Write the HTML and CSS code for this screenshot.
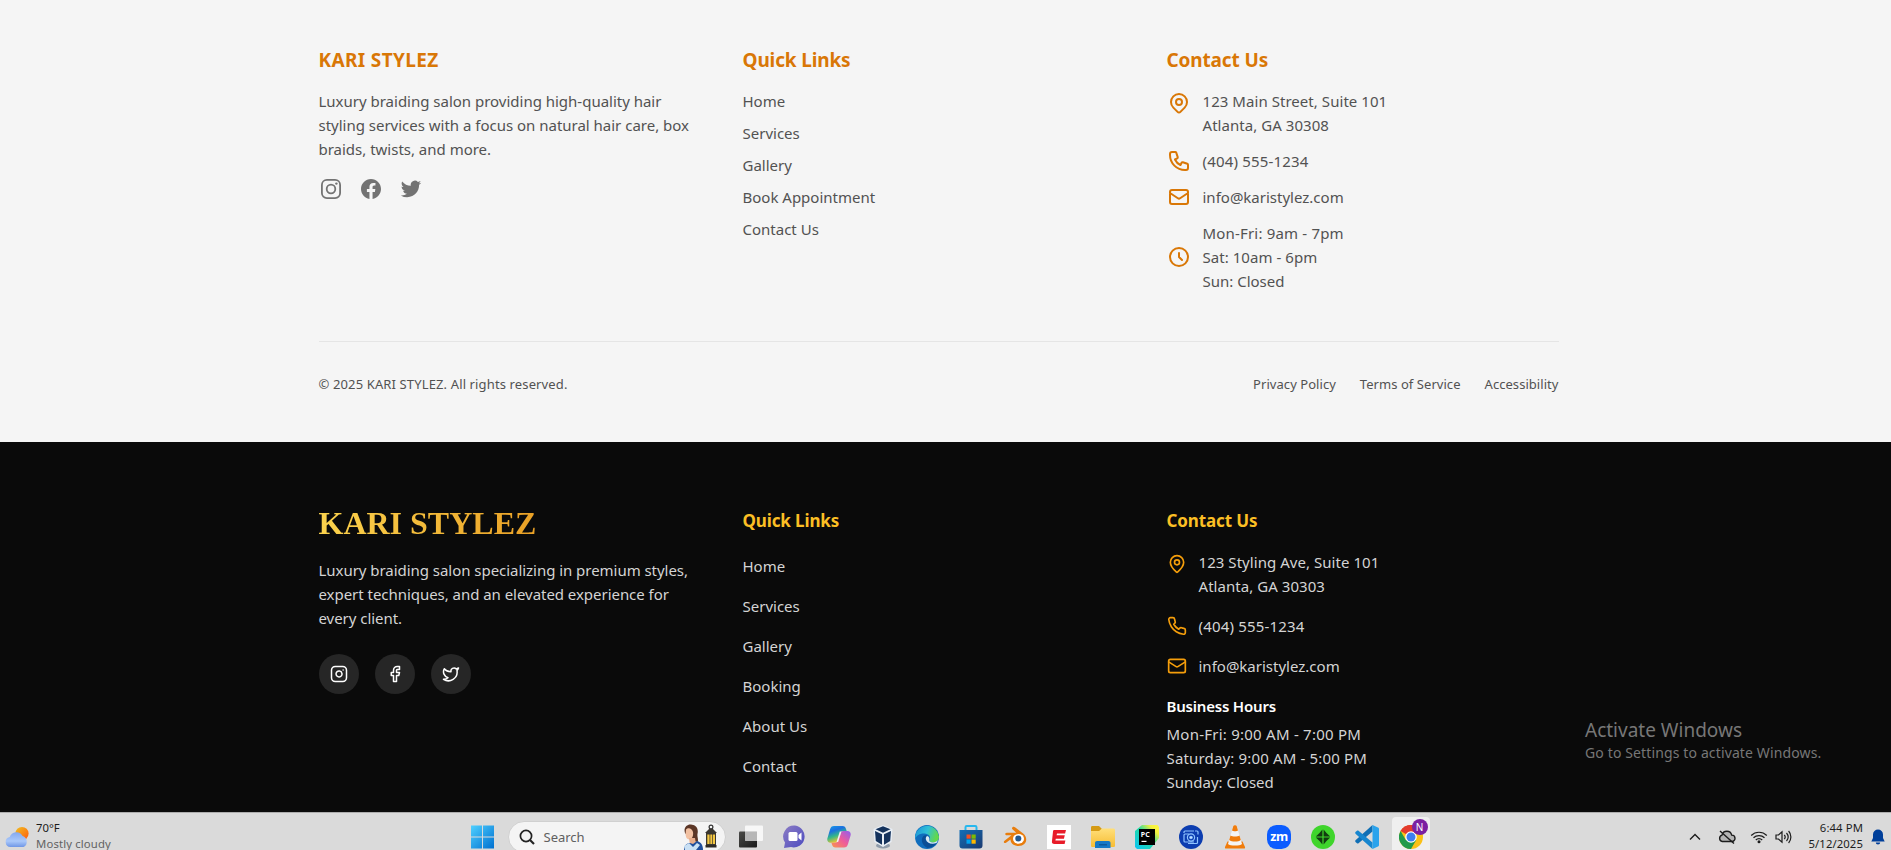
FILE: index.html
```html
<!DOCTYPE html>
<html lang="en">
<head>
<meta charset="utf-8">
<title>KARI STYLEZ</title>
<link rel="stylesheet" href="styles.css">
</head>
<body>
<div class="screen">
  <footer class="footer-light">
    <div class="container">
      <div class="columns">
        <section>
          <h3 class="title brand">KARI STYLEZ</h3>
          <p class="about">Luxury braiding salon providing high-quality hair<br>styling services with a focus on natural hair care, box<br>braids, twists, and more.</p>
          <div class="social-plain">
            <svg viewBox="0 0 24 24" fill="none" stroke="currentColor" stroke-width="1.8"><rect x="2.9" y="2.9" width="18.2" height="18.2" rx="5"/><circle cx="12" cy="12" r="4.3"/><circle cx="17.4" cy="6.6" r="1.2" fill="currentColor" stroke="none"/></svg>
            <svg viewBox="0 0 24 24" fill="currentColor"><path d="M12 2C6.477 2 2 6.477 2 12c0 4.991 3.657 9.128 8.438 9.879V14.89h-2.54V12h2.54V9.797c0-2.506 1.492-3.89 3.777-3.89 1.094 0 2.238.195 2.238.195v2.46h-1.26c-1.243 0-1.63.771-1.63 1.562V12h2.773l-.443 2.89h-2.33v6.989C18.343 21.129 22 16.99 22 12c0-5.523-4.477-10-10-10z"/></svg>
            <svg viewBox="0 0 24 24" fill="currentColor"><path d="M22.162 5.656a8.384 8.384 0 0 1-2.402.658A4.196 4.196 0 0 0 21.6 4c-.82.488-1.719.83-2.656 1.015a4.182 4.182 0 0 0-7.126 3.814 11.874 11.874 0 0 1-8.62-4.37 4.168 4.168 0 0 0-.566 2.103c0 1.45.738 2.731 1.86 3.481a4.168 4.168 0 0 1-1.894-.523v.052a4.185 4.185 0 0 0 3.355 4.101 4.21 4.21 0 0 1-1.89.072A4.185 4.185 0 0 0 7.97 16.65a8.394 8.394 0 0 1-6.191 1.732 11.83 11.83 0 0 0 6.41 1.88c7.693 0 11.9-6.373 11.9-11.9 0-.18-.005-.362-.013-.54a8.496 8.496 0 0 0 2.087-2.165z"/></svg>
          </div>
        </section>
        <section>
          <h3 class="title">Quick Links</h3>
          <ul class="links">
            <li>Home</li><li>Services</li><li>Gallery</li><li>Book Appointment</li><li>Contact Us</li>
          </ul>
        </section>
        <section>
          <h3 class="title">Contact Us</h3>
          <ul class="contact">
            <li class="top"><svg viewBox="0 0 24 24"><path d="M17.657 16.657L13.414 20.9a1.998 1.998 0 01-2.827 0l-4.244-4.243a8 8 0 1111.314 0z"/><path d="M15 11a3 3 0 11-6 0 3 3 0 016 0z"/></svg><span class="address">123 Main Street, Suite 101<br>Atlanta, GA 30308</span></li>
            <li><svg viewBox="0 0 24 24"><path d="M3 5a2 2 0 012-2h3.28a1 1 0 01.948.684l1.498 4.493a1 1 0 01-.502 1.21l-2.257 1.13a11.042 11.042 0 005.516 5.516l1.13-2.257a1 1 0 011.21-.502l4.493 1.498a1 1 0 01.684.949V19a2 2 0 01-2 2h-1C9.716 21 3 14.284 3 6V5z"/></svg><span class="digits">(404) 555-1234</span></li>
            <li><svg viewBox="0 0 24 24"><path d="M3 8l7.89 5.26a2 2 0 002.22 0L21 8M5 19h14a2 2 0 002-2V7a2 2 0 00-2-2H5a2 2 0 00-2 2v10a2 2 0 002 2z"/></svg><span>info@karistylez.com</span></li>
            <li><svg viewBox="0 0 24 24"><path d="M12 8v4l3 3m6-3a9 9 0 11-18 0 9 9 0 0118 0z"/></svg><span><span class="digits">Mon-Fri: 9am - 7pm</span><br><span class="address">Sat: 10am - 6pm</span><br>Sun: Closed</span></li>
          </ul>
        </section>
      </div>
      <div class="legal">
        <span class="copyright">© 2025 KARI STYLEZ. All rights reserved.</span>
        <nav><span>Privacy Policy</span><span>Terms of Service</span><span>Accessibility</span></nav>
      </div>
    </div>
  </footer>

  <footer class="footer-dark">
    <div class="container columns">
      <section>
        <h2 class="logo"><span>KARI STYLEZ</span></h2>
        <p class="about">Luxury braiding salon specializing in premium styles,<br>expert techniques, and an elevated experience for<br>every client.</p>
        <div class="social-round">
          <span><svg viewBox="0 0 24 24"><rect x="2" y="2" width="20" height="20" rx="5"/><path d="M16 11.37A4 4 0 1 1 12.63 8 4 4 0 0 1 16 11.37z"/><path d="M17.5 6.5h.01"/></svg></span>
          <span><svg viewBox="0 0 24 24"><path d="M18 2h-3a5 5 0 0 0-5 5v3H7v4h3v8h4v-8h3l1-4h-4V7a1 1 0 0 1 1-1h3z"/></svg></span>
          <span><svg viewBox="0 0 24 24"><path d="M22 4s-.7 2.1-2 3.4c1.6 10-9.4 17.3-18 11.6 2.2.1 4.4-.6 6-2C3 15.5.5 9.6 3 5c2.2 2.6 5.6 4.1 9 4-.9-4.2 4-6.6 7-3.8 1.1 0 3-1.2 3-1.2z"/></svg></span>
        </div>
      </section>
      <section>
        <h3 class="title">Quick Links</h3>
        <ul class="links">
          <li>Home</li><li>Services</li><li>Gallery</li><li>Booking</li><li>About Us</li><li>Contact</li>
        </ul>
      </section>
      <section>
        <h3 class="title">Contact Us</h3>
        <ul class="contact">
          <li class="top"><svg viewBox="0 0 24 24"><path d="M20 10c0 4.993-5.539 10.193-7.399 11.799a1 1 0 0 1-1.202 0C9.539 20.193 4 14.993 4 10a8 8 0 0 1 16 0"/><circle cx="12" cy="10" r="3"/></svg><span class="address">123 Styling Ave, Suite 101<br>Atlanta, GA 30303</span></li>
          <li><svg viewBox="0 0 24 24"><path d="M22 16.92v3a2 2 0 0 1-2.18 2 19.79 19.79 0 0 1-8.63-3.07 19.5 19.5 0 0 1-6-6 19.79 19.79 0 0 1-3.07-8.67A2 2 0 0 1 4.11 2h3a2 2 0 0 1 2 1.72 12.84 12.84 0 0 0 .7 2.81 2 2 0 0 1-.45 2.11L8.09 9.91a16 16 0 0 0 6 6l1.27-1.27a2 2 0 0 1 2.11-.45 12.84 12.84 0 0 0 2.81.7A2 2 0 0 1 22 16.92z"/></svg><span class="digits">(404) 555-1234</span></li>
          <li><svg viewBox="0 0 24 24"><rect x="2" y="4" width="20" height="16" rx="2"/><path d="m22 7-8.97 5.7a1.94 1.94 0 0 1-2.06 0L2 7"/></svg><span>info@karistylez.com</span></li>
        </ul>
        <h4 class="hours-title">Business Hours</h4>
        <p class="hours"><span class="mon-fri">Mon-Fri: 9:00 AM - 7:00 PM</span><br><span class="sat">Saturday: 9:00 AM - 5:00 PM</span><br>Sunday: Closed</p>
      </section>
    </div>
  </footer>

  <div class="watermark">
    <p class="wm-title">Activate Windows</p>
    <p class="wm-text">Go to Settings to activate Windows.</p>
  </div>

  <div class="taskbar">
    <div class="weather">
      <svg width="24" height="22" viewBox="0 0 24 22">
        <defs>
          <linearGradient id="sun" x1="0" y1="0" x2="1" y2="1"><stop offset="0" stop-color="#f0c020"/><stop offset="1" stop-color="#ff5a10"/></linearGradient>
          <linearGradient id="cloud" x1="0" y1="0" x2="0" y2="1"><stop offset="0" stop-color="#84a8ee"/><stop offset=".6" stop-color="#a9c8fa"/><stop offset="1" stop-color="#6f96e6"/></linearGradient>
        </defs>
        <circle cx="17" cy="7.5" r="6.6" fill="url(#sun)"/>
        <path d="M5.5 21a5 5 0 0 1-.8-9.9A7 7 0 0 1 17.6 10a6 6 0 0 1 1 11z" fill="url(#cloud)"/>
      </svg>
      <div class="weather-text"><span class="temp">70°F</span><span class="sky">Mostly cloudy</span></div>
    </div>

    <div class="apps">
      <svg class="start" width="24" height="24" viewBox="0 0 24 24">
        <defs><linearGradient id="win" x1="0" y1="0" x2="1" y2="1"><stop offset="0" stop-color="#4fd0ff"/><stop offset="1" stop-color="#0070d0"/></linearGradient></defs>
        <path fill="url(#win)" d="M1 .5h11v11H1zM13 .5h11v11H13zM1 12.5h11v11H1zM13 12.5h11v11H13z"/>
      </svg>
      <div class="search">
        <svg width="16" height="16" viewBox="0 0 16 16" fill="none" stroke="#222" stroke-width="1.7"><circle cx="7" cy="7" r="5.6"/><path d="M11 11l4 4" stroke-width="2.2"/></svg>
        <span>Search</span>
        <svg class="art" width="34" height="26" viewBox="0 0 34 26">
          <path d="M2 9C0 3 5-.5 9 .8c5 .4 6.500 5 5.500 9-.5 3 1 5 .3 8H9z" fill="#5b3626"/>
          <path d="M3 5.500c2-2.500 6-1.500 7 2.500.6 4-1 7-3.500 7.500C3 15.500 2 12 3 5.500z" fill="#f2c1a2"/>
          <path d="M6 14h6l1 6-6 1z" fill="#e8ae8d"/>
          <path d="M1 26c0-5 3-7 6-7l3 1 4-3c4 1 6 4 6 9z" fill="#1f4e9c"/>
          <path d="M1 22l5-3 4 4 4-4 3 2-4 5H2z" fill="#c9e0f4"/>
          <circle cx="28" cy="3" r="1.900" fill="none" stroke="#333" stroke-width="1.200"/>
          <path d="M22 9l4-4h4l4 4z" fill="#3a3630"/>
          <path d="M23 9h10v12H23z" fill="#3a3630"/>
          <path d="M24.300 10.500h2.300V20h-2.300zM27.300 10.500h2V20h-2zM30 10.500h2V20h-2z" fill="#f5c842"/>
          <path d="M22.500 21h11v2.500h-11z" fill="#2c2925"/>
        </svg>
      </div>

      <svg class="app" viewBox="0 0 24 24">
        <defs><linearGradient id="tvd" x1="0" y1="0" x2="1" y2="1"><stop offset="0" stop-color="#4b4b48"/><stop offset="1" stop-color="#1a1a1a"/></linearGradient></defs>
        <rect y="6.500" width="18" height="16" rx="1" fill="url(#tvd)"/><rect x="6" y=".5" width="18" height="15.500" rx="1" fill="#fafafa" fill-opacity=".88"/><rect x="6" y="6.500" width="12" height="9.500" fill="#a8a8a8" fill-opacity=".75"/>
      </svg>
      <svg class="app" viewBox="0 0 24 24">
        <defs><linearGradient id="chat" x1="0" y1="0" x2="1" y2="1"><stop offset="0" stop-color="#8c7cc4"/><stop offset="1" stop-color="#4c4cc0"/></linearGradient></defs>
        <path d="M12 .5a11 11 0 1 1-4 21.600L1 23l1-5.500A11 11 0 0 1 12 .5z" fill="url(#chat)"/><rect x="5.500" y="7" width="9" height="9" rx="1.500" fill="#fff"/><path d="M15.500 10l3-2.500v8l-3-2.500z" fill="#fff"/>
      </svg>
      <svg class="app" viewBox="0 0 24 24">
        <defs>
          <linearGradient id="cpa" x1="0" y1="0" x2=".4" y2="1"><stop offset="0" stop-color="#18a0e8"/><stop offset=".35" stop-color="#1b6fe0"/><stop offset=".65" stop-color="#35b889"/><stop offset="1" stop-color="#f4c52c"/></linearGradient>
          <linearGradient id="cpb" x1="1" y1="0" x2="0" y2="1"><stop offset="0" stop-color="#8f5ff0"/><stop offset=".5" stop-color="#ef5b9a"/><stop offset="1" stop-color="#f9964a"/></linearGradient>
        </defs>
        <path d="M7 1h8.500c2 0 3 1 3.500 3l.7 2h-3.200c-1.800 0-2.500.8-3 2.500L11.500 15c-.6 2-1.500 2.700-3.500 2.700H3.500C.7 17.700-.2 15.500.5 13L3 4.500C3.700 2 4.800 1 7 1z" fill="url(#cpa)"/>
        <path d="M17 22.500H8.500c-2 0-3-1-3.500-3l-.6-1.800H8c2 0 3-.7 3.500-2.700L13.500 8.500C14 6.800 14.700 6 16.500 6h4c2.800 0 3.700 2.200 3 4.700L21 19c-.7 2.500-1.800 3.500-4 3.500z" fill="url(#cpb)"/>
        <path d="M14.500 6.500l-3.400 10.500H9.500l3.300-10.500z" fill="#f5ecf4"/>
      </svg>
      <svg class="app" viewBox="0 0 24 24">
        <ellipse cx="12" cy="20.500" rx="7" ry="3" fill="#8f9cab"/><path d="M12 0l9.500 4-1 13L12 22l-8.500-5-1-13z" fill="#e8eef5"/><path d="M12 1.300l7.500 3L12 7.800l-7.500-3.500zM4 6l7 3.300v10.500L4.800 16zM20 6l-7 3.300v10.500l6.200-3.800z" fill="#14325c"/>
      </svg>
      <svg class="app" viewBox="0 0 24 24">
        <defs><linearGradient id="eda" x1="0" y1="0" x2="1" y2=".3"><stop offset="0" stop-color="#1b8fd6"/><stop offset=".55" stop-color="#2fc0d8"/><stop offset="1" stop-color="#62d84c"/></linearGradient></defs>
        <circle cx="12" cy="12" r="12" fill="#0f6dbd"/>
        <path d="M.2 11A12 12 0 0 1 24 11.500c0 4-2.800 6-6.200 6-2.800 0-3.800-1-3.300-2 1.400-2.300.4-6-3.500-6.700C6 7.800 1.500 10 .2 14z" fill="url(#eda)"/>
        <path d="M8.500 11c-3 3-2 9 4 12 4-.3 7.500-2 9.500-5.500-5 2.200-10 .5-11-3-.4-1.500.2-3 1.200-3.800-1.200-.8-2.700-.6-3.700.3z" fill="#0b4f96"/>
        <path d="M12 11c2 .2 2.800 2.200 2.300 4-.3 1.300.8 2.500 3.600 2.500 2 0 4-1 4.800-2.200-.3 1.500-.7 2.200-1.200 2.800-5 1.800-9.800 0-10.600-3.500-.3-1.500.1-2.700 1.100-3.600z" fill="#dceaf2"/>
      </svg>
      <svg class="app" viewBox="0 0 24 24">
        <defs><linearGradient id="st" x1="0" y1="0" x2="1" y2="1"><stop offset="0" stop-color="#126fb8"/><stop offset="1" stop-color="#1b3a70"/></linearGradient></defs>
        <path d="M6.500 6V2.300c0-.8.500-1.300 1.300-1.300h8.400c.8 0 1.300.5 1.300 1.300V6" fill="none" stroke="#27b8ee" stroke-width="2"/><path d="M.5 5h23v15.500a3 3 0 0 1-3 3h-17a3 3 0 0 1-3-3z" fill="url(#st)"/>
        <path d="M7.500 9.500h4.200v4.200H7.500z" fill="#f25022"/><path d="M12.500 9.500h4.200v4.200h-4.200z" fill="#7fba00"/><path d="M7.500 14.500h4.200v4.200H7.500z" fill="#00a4ef"/><path d="M12.500 14.500h4.200v4.200h-4.200z" fill="#ffb900"/>
      </svg>
      <svg class="app" viewBox="0 0 24 24">
        <path d="M9.500 2.200c.8-.6 1.700-.5 2.500.1l8.500 6.500c5 4.500 3 12-5 12.200-5 0-8-3-8-6.500L3 17.700c-1.600 1-3-.7-1.500-2l7-5.400H3.700c-2-.1-2-2.500 0-2.600h9.500L9.700 4.600c-.9-.7-.9-1.700-.2-2.400z" fill="#e87d0d"/><ellipse cx="15.500" cy="13.800" rx="5.500" ry="4.900" fill="#fff"/><circle cx="15.300" cy="13.600" r="3" fill="#23588f"/>
      </svg>
      <svg class="app" viewBox="0 0 24 24">
        <path d="M0 0h24v24H0z" fill="#fff"/><path d="M7 5h12l-.9 3.500H10l-.4 1.800h8.200l-.9 3.400H8.800l-.4 1.800h10l-.8 3.500H7.500c-2 0-3-1-2.500-3.300L6 6.500C6.200 5.500 6.500 5 7 5z" fill="#e81c2a"/>
      </svg>
      <svg class="app" viewBox="0 0 24 24">
        <defs><linearGradient id="fo" x1="0" y1="0" x2="0" y2="1"><stop offset="0" stop-color="#ffdf7a"/><stop offset="1" stop-color="#f7bd34"/></linearGradient></defs>
        <path d="M0 2.500C0 1.700.5 1 1.300 1H8l3 3v5H0z" fill="#d59a14"/><path d="M0 6l8 0 3-2.500h11.500c.9 0 1.500.6 1.500 1.500v15.500c0 1-.6 1.500-1.500 1.500h-21C.6 22 0 21.500 0 20.500z" fill="url(#fo)"/><path d="M4 23v-5c0-1.200.8-2 2-2h11.500c1.200 0 2 .8 2 2v5z" fill="#1579c6"/><path d="M8 19h8v1.500H8z" fill="#0d5a9c"/>
      </svg>
      <svg class="app" viewBox="0 0 24 24">
        <defs><linearGradient id="py" x1="0" y1="1" x2="1" y2="0"><stop offset="0" stop-color="#0ac4f5"/><stop offset=".5" stop-color="#20d8a8"/><stop offset=".8" stop-color="#f5f03c"/><stop offset="1" stop-color="#fcf84a"/></linearGradient></defs>
        <path d="M7 0h15.500L24 2v11l-9 11H2L0 22V6z" fill="url(#py)"/><path d="M4 4h16v16H4z" fill="#000"/><text class="pc" x="5.800" y="12.400">PC</text><path d="M6.500 15.800h5v1.200h-5z" fill="#fff"/>
      </svg>
      <svg class="app" viewBox="0 0 24 24" fill="none" stroke="#8fc4ff" stroke-width="1.200">
        <circle cx="12" cy="12" r="12" fill="#0c3db0" stroke="none"/><path d="M5 8V7a1 1 0 0 1 1-1h9M5 16V10a1 1 0 0 1 1-1h4M9 18.500h8.500a1 1 0 0 0 1-1V12M16 6h2a1 1 0 0 1 1 1v2.500M5 16a1 1 0 0 0 1 1h9"/><circle cx="12" cy="12.500" r="3.600"/><circle cx="12" cy="12.500" r="1.200" fill="#fff"/>
      </svg>
      <svg class="app" viewBox="0 0 24 24">
        <path d="M4.500 16.500h15L22 22c.3 1-.2 1.500-1 1.500H3c-.8 0-1.300-.5-1-1.500z" fill="#f07c0c"/><path d="M10.300 1c.3-.9 3.100-.9 3.400 0l5.300 18c-2 2-12 2-14 0z" fill="#f4f4f4"/><path d="M10.300 1c.3-.9 3.100-.9 3.400 0L15 5.500c-1 .9-5 .9-6 0zM7.500 10.500c2 1.400 7 1.400 9 0l1.300 4.500c-2.500 2-9 2-11.600 0z" fill="#f07c0c"/>
      </svg>
      <svg class="app" viewBox="0 0 24 24"><rect width="24" height="24" rx="9.500" fill="#0b5cff"/><text class="zm" x="12" y="16" text-anchor="middle">zm</text></svg>
      <svg class="app" viewBox="0 0 24 24"><circle cx="12" cy="12" r="12" fill="#3fd52c"/><path d="M11.400 4.500v6.900H4.800L8.500 8zM12.600 4.500v6.900h6.600L15.500 8zM11.400 19.500v-6.900H4.800L8.500 16zM12.600 19.500v-6.900h6.600L15.500 16z" fill="#123c10"/></svg>
      <svg class="app" viewBox="0 0 24 24">
        <path d="M17.500 0v6.500L3.500 18.300c-.5.400-1 .4-1.500 0l-1.500-1.400c-.5-.5-.5-1.100 0-1.600z" fill="#0f6fb5"/><path d="M17.500 24v-6.500L3.500 5.700c-.5-.4-1-.4-1.500 0L.5 7.100c-.5.500-.5 1.100 0 1.600z" fill="#1686cf"/><path d="M17.500 0L23 2.500c.7.300 1 .8 1 1.500v16c0 .7-.3 1.200-1 1.500L17.500 24z" fill="#2aa3ec"/>
      </svg>
      <div class="active">
        <svg class="app" viewBox="0 0 24 24">
          <circle cx="12" cy="12" r="12" fill="#fbc116"/><path d="M12 12L1.600 6A12 12 0 0 1 22.400 6z" fill="#e33b2e"/><path d="M1.600 6A12 12 0 0 0 12 24l5.200-9H6.800z" fill="#229a4b"/><path d="M1.600 6A12 12 0 0 1 12 0v6.500z" fill="#e33b2e"/><circle cx="12" cy="12" r="5.800" fill="#fff"/><circle cx="12" cy="12" r="4.500" fill="#3d7ff0"/>
        </svg>
        <span class="badge">N</span>
      </div>
    </div>

    <div class="tray">
      <svg width="12" height="8" viewBox="0 0 12 8" fill="none" stroke="#1c1c1c" stroke-width="1.400"><path d="M1 6.500l5-5 5 5"/></svg>
      <svg class="cloud" width="18" height="14" viewBox="0 0 18 14" fill="none" stroke="#1c1c1c" stroke-width="1.400"><path d="M4.300 11.500a3.300 3.300 0 0 1-.3-6.400 5 5 0 0 1 9.700 0 3.200 3.200 0 0 1 .2 6.400z" fill="#b4b4b4"/><path d="M2 1l14 12.500"/></svg>
      <svg class="wifi" width="18" height="14" viewBox="0 0 18 14" fill="none" stroke="#1c1c1c" stroke-width="1.200"><path d="M1.200 5.500a11 11 0 0 1 15.600 0M3.500 7.800a7.800 7.800 0 0 1 11 0M5.800 10a4.500 4.500 0 0 1 6.400 0"/><circle cx="9" cy="11.800" r="1.500" fill="#1c1c1c" stroke="none"/></svg>
      <svg class="vol" width="17" height="14" viewBox="0 0 17 14" fill="none" stroke="#1c1c1c" stroke-width="1.200"><path d="M1 5h2.500L7 1.800v10.400L3.500 9H1zM9.300 4.800a3.500 3.500 0 0 1 0 4.400M11.500 3a6.200 6.200 0 0 1 0 8M13.600 1a9 9 0 0 1 0 12"/></svg>
      <div class="clock"><span>6:44 PM</span><span>5/12/2025</span></div>
      <svg width="14" height="16" viewBox="0 0 14 16" fill="#003f9a"><path d="M7 .5a5 5 0 0 1 5 5V9l1.700 3.500H.3L2 9V5.500a5 5 0 0 1 5-5zM4.800 13.500h4.400a2.200 2 0 0 1-4.400 0z"/></svg>
    </div>
  </div>
</div>
</body>
</html>
```

FILE: styles.css
```css
* { box-sizing: border-box; margin: 0; padding: 0; }

body {
  background: #0a0a0a;
  font-family: "Noto Sans", "Open Sans", sans-serif;
  font-size: 15px;
  line-height: 24px;
  overflow: hidden;
  white-space: nowrap;
}

ul { list-style: none; }
svg { display: block; flex: none; }

.screen {
  position: relative;
  display: flex;
  flex-direction: column;
  height: 850px;
  overflow: hidden;
}

.container { width: 1240px; margin-left: 318.500px; }
.columns { display: grid; grid-template-columns: repeat(3, 392px); column-gap: 32px; }

.address { letter-spacing: .05px; }
.digits { letter-spacing: .18px; }
.mon-fri { letter-spacing: .24px; }
.sat { letter-spacing: .16px; }

/* Light footer */
.footer-light {
  flex: none;
  height: 442px;
  padding-top: 46px;
  background: #f5f5f5;
  color: #525252;
}
.footer-light .title {
  margin-bottom: 15px;
  color: #d97706;
  font-size: 19px;
  font-weight: 700;
  line-height: 28px;
  letter-spacing: -.14px;
}
.footer-light .brand { letter-spacing: .35px; }
.footer-light .about { letter-spacing: -.01px; }
.footer-light .links { display: flex; flex-direction: column; gap: 8px; }
.footer-light .contact { display: flex; flex-direction: column; gap: 12px; }
.contact li { display: flex; align-items: center; gap: 12px; }
.contact .top { align-items: flex-start; }
.contact svg { fill: none; stroke: currentColor; stroke-width: 2; stroke-linecap: round; stroke-linejoin: round; }
.footer-light .contact svg { width: 24px; height: 24px; color: #d97706; }
.footer-light .top svg { margin-top: 2px; }

.social-plain { display: flex; gap: 16px; margin-top: 16px; color: #737373; }
.social-plain svg { width: 24px; height: 24px; }

.legal {
  display: flex;
  justify-content: space-between;
  margin-top: 48px;
  padding-top: 32px;
  border-top: 1px solid #e5e5e5;
  font-size: 13px;
  line-height: 20px;
}
.legal nav { display: flex; gap: 24px; letter-spacing: .05px; }
.copyright { letter-spacing: .13px; }

/* Dark footer */
.footer-dark {
  flex: none;
  height: 370px;
  padding-top: 64px;
  background: #0a0a0a;
  color: #d4d4d4;
}
.footer-dark .title {
  margin-bottom: 15px;
  padding-top: 1px;
  color: #fbbf24;
  font-size: 17px;
  font-weight: 700;
  line-height: 28px;
  letter-spacing: -.12px;
}
.footer-dark .about { letter-spacing: -.04px; }
.logo {
  margin: -1px 0 17px;
  font: 700 32px/36px "Liberation Serif", serif;
  color: transparent;
  background: linear-gradient(90deg, #fcd34d, #d97706);
  -webkit-background-clip: text;
  background-clip: text;
}
.social-round { display: flex; gap: 16px; margin-top: 24px; }
.social-round span {
  display: flex;
  align-items: center;
  justify-content: center;
  width: 40px;
  height: 40px;
  border-radius: 50%;
  background: #262626;
  color: #fff;
}
.social-round svg {
  width: 18px;
  height: 18px;
  fill: none;
  stroke: currentColor;
  stroke-width: 2;
  stroke-linecap: round;
  stroke-linejoin: round;
}
.footer-dark .links { display: flex; flex-direction: column; gap: 16px; padding-top: 4px; }
.footer-dark .contact { display: flex; flex-direction: column; gap: 16px; }
.footer-dark .contact svg { width: 20px; height: 20px; color: #f59e0b; }
.footer-dark .top svg { margin-top: 4px; }
.hours-title { margin: 16px 0 4px; color: #fff; font-size: 15px; font-weight: 600; letter-spacing: -.2px; }

/* Desktop watermark */
.watermark { position: absolute; left: 1585px; top: 716px; color: #777; }
.wm-title { font-size: 19px; line-height: 28px; }
.wm-text { font-size: 14px; line-height: 18px; letter-spacing: .13px; }

/* Taskbar */
.taskbar {
  flex: none;
  display: flex;
  align-items: center;
  height: 48px;
  border-top: 1px solid #adadad;
  background: #dadada;
  color: #1c1c1c;
  font-size: 11.300px;
  line-height: 16px;
}
.weather { display: flex; gap: 7px; width: 469.500px; padding-left: 5px; align-items: center; }
.weather-text { display: flex; flex-direction: column; margin-top: -1px; }
.sky { color: #626262; letter-spacing: .15px; }

.apps { display: flex; align-items: center; gap: 20px; }
.app { width: 24px; height: 24px; }
.start { margin-right: -6px; }
.search {
  display: flex;
  align-items: center;
  width: 218px;
  height: 32px;
  margin-right: -7px;
  padding: 0 8px 0 10px;
  border: 1px solid #d0d0d0;
  border-radius: 16px;
  background: #f4f4f4;
  color: #606060;
  font-size: 13px;
}
.search span { margin-left: 9px; }
.art { margin-left: auto; }
.active {
  position: relative;
  display: flex;
  align-items: center;
  justify-content: center;
  width: 38px;
  height: 40px;
  margin-left: -7px;
  border-radius: 4px;
  background: #efefef;
}
.badge {
  position: absolute;
  right: 2px;
  top: 2px;
  width: 16px;
  height: 16px;
  border-radius: 50%;
  background: #7b1fa2;
  color: #fff;
  font-size: 10px;
  text-align: center;
}
.pc { font: 700 7px "Noto Sans", sans-serif; fill: #fff; }
.zm { font: 700 12.500px "Noto Sans", sans-serif; fill: #fff; letter-spacing: -.5px; }

.tray { display: flex; align-items: center; margin-left: auto; padding-right: 6px; }
.cloud { margin-left: 17px; }
.wifi { margin-left: 14px; }
.vol { margin-left: 7px; }
.clock { display: flex; flex-direction: column; align-items: flex-end; width: 61px; margin: -1px 8px 0 10px; letter-spacing: .1px; }
```
